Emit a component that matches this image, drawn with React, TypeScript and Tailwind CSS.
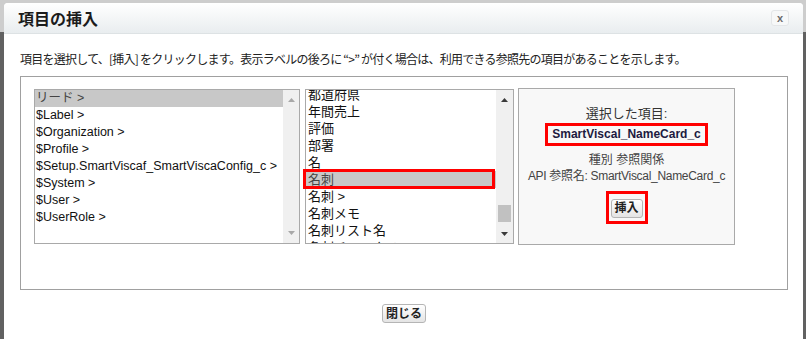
import React from 'react';

const leftItems = [
  'リード >',
  '$Label >',
  '$Organization >',
  '$Profile >',
  '$Setup.SmartViscaf_SmartViscaConfig_c >',
  '$System >',
  '$User >',
  '$UserRole >',
];

const fieldItems = ['都道府県', '年間売上', '評価', '部署', '名', '名刺', '名刺 >', '名刺メモ', '名刺リスト名', '名刺チェックメモ'];

const font = "font-['Liberation_Sans','Noto_Sans_CJK_JP',sans-serif]";

const Arrow = ({ up, dark }: { up?: boolean; dark?: boolean }) => (
  <svg width="7" height="4" viewBox="0 0 7 4">
    <path d={up ? 'M0 4 L3.5 0 L7 4Z' : 'M0 0 L7 0 L3.5 4Z'} fill={dark ? '#3a3a3a' : '#a8a8a8'} />
  </svg>
);

const App: React.FC = () => {
  return (
    <div className={`w-[806px] h-[339px] overflow-hidden bg-[linear-gradient(to_bottom,#cdcdcd_0,#cdcdcd_32px,#616161_32px)] pt-[3px] pl-[4px] pr-[3px] ${font}`}>
      <div className="bg-white rounded-t-[4px] h-[336px] flex flex-col">
        {/* header */}
        <div className="h-[31px] flex items-center justify-between rounded-t-[4px] border-b border-[#dde2e4] bg-[linear-gradient(to_bottom,#ffffff,#e9edef)]">
          <h1 className="pl-[14px] text-[16px] font-bold text-[#1b1b1b] font-['Noto_Sans_CJK_JP',sans-serif] leading-none">項目の挿入</h1>
          <button className="mr-[14px] w-[18px] h-[16px] rounded-[3px] border border-[#e4e6e8] bg-[#f7f8f8] text-[#6a6a6a] text-[11px] font-bold leading-none flex items-center justify-center">
            x
          </button>
        </div>

        <div className="pl-[16px] pr-[15px]">
          <p className="mt-[16px] text-[12px] leading-[17px] text-[#222] tracking-[-0.75px] font-['Noto_Sans_CJK_JP',sans-serif]">
            項目を選択して、[挿入] をクリックします。表示ラベルの後ろに “&gt;” が付く場合は、利用できる参照先の項目があることを示します。
          </p>

          <div className="mt-[9px] h-[214px] border border-[#a0a0a0] pl-[13px] pt-[12px] flex items-start">
            {/* left list */}
            <div className="w-[266px] h-[155px] border border-[#a9a9a9] flex bg-white">
              <div className="flex-1 overflow-hidden text-[12.5px] text-[#111]">
                {leftItems.map((it, i) => (
                  <div key={it} className={`h-[17px] leading-[17px] pl-[1px] whitespace-nowrap ${i === 0 ? 'bg-[#c8c8c8] text-[#444]' : ''}`}>
                    {it}
                  </div>
                ))}
              </div>
              <div className="w-[16px] bg-[#f0f0f0] flex flex-col items-center justify-between pt-[8px] pb-[8px]">
                <Arrow up />
                <Arrow />
              </div>
            </div>

            {/* field list */}
            <div className="relative ml-[5px] w-[209px] h-[155px] border border-[#a9a9a9] flex bg-white">
              <div className="flex-1 overflow-hidden text-[13px] text-[#111]">
                <div className="-mt-[4px]">
                  {fieldItems.map((it, i) => (
                    <div key={it} className={`h-[17px] leading-[17px] pl-[2px] whitespace-nowrap ${i === 5 ? 'bg-[#c8c8c8] text-[#444]' : ''}`}>
                      {it}
                    </div>
                  ))}
                </div>
              </div>
              <div className="w-[17px] bg-[#f0f0f0] flex flex-col items-center">
                <div className="h-[17px] flex items-center justify-center pt-[2px]">
                  <Arrow up dark />
                </div>
                <div className="flex-1 w-full px-[2px]">
                  <div className="mt-[98px] h-[17px] bg-[#c1c1c1]" />
                </div>
                <div className="h-[17px] flex items-center justify-center pb-[2px]">
                  <Arrow dark />
                </div>
              </div>
              <div className="absolute left-[-3px] top-[79px] w-[192px] h-[20px] border-[3px] border-[#ff0000]" />
            </div>

            {/* selected field */}
            <div className="ml-[4px] -mt-[1px] w-[217px] h-[157px] border border-[#a9a9a9] bg-[#f8f8f8] flex flex-col items-center pt-[16px] text-[#333]">
              <div className="text-[13px] leading-[17px]">選択した項目:</div>
              <div className="mt-[1px] border-[3px] border-[#ff0000] px-[4px] text-[12px] leading-[17px] font-bold text-[#1d1a40] whitespace-nowrap">
                SmartViscal_NameCard_c
              </div>
              <div className="mt-[6px] text-[12px] leading-[16px] text-[#444]">種別 参照関係</div>
              <div className="text-[12px] leading-[16px] text-[#444] tracking-[-0.3px] whitespace-nowrap">API 参照名: SmartViscal_NameCard_c</div>
              <div className="mt-[7px] border-[3px] border-[#ff0000] px-[2px] pt-[1px] pb-[2px]">
                <button className="w-[32px] h-[19px] rounded-[3px] border border-[#b5b5b5] bg-[linear-gradient(to_bottom,#ffffff,#e4e4e4)] text-[12px] font-bold text-[#222] leading-none">
                  挿入
                </button>
              </div>
            </div>
          </div>

          <div className="mt-[14px] flex justify-center">
            <button className="w-[44px] h-[19px] rounded-[3px] border border-[#b5b5b5] bg-[linear-gradient(to_bottom,#ffffff,#e4e4e4)] text-[12px] font-bold text-[#222] leading-none">
              閉じる
            </button>
          </div>
        </div>
      </div>
    </div>
  );
};

export default App;
